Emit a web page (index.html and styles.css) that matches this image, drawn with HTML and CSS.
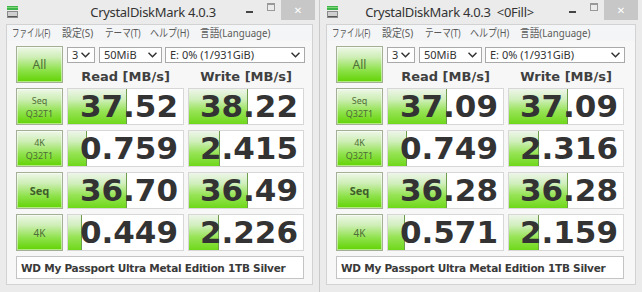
FILE: index.html
```html
<!DOCTYPE html>
<html>
<head>
<meta charset="utf-8">
<link rel="stylesheet" href="styles.css">
</head>
<body>
<div class="desk">
  <div class="win win-left">
    <div class="titlebar">
      <svg class="appicon" width="11" height="12" viewBox="0 0 11 12"><rect x="0" y="0" width="11" height="4" fill="#3fb549"/><rect x="0" y="1" width="11" height="1" fill="#7fd67a"/><rect x="0" y="5" width="11" height="7" fill="#8a8a8a"/><rect x="1" y="6" width="9" height="4" fill="#cfcfcf"/><rect x="1" y="10" width="9" height="1" fill="#555"/></svg>
      <div class="title title-center">CrystalDiskMark 4.0.3</div>
      <div class="ctrls">
        <div class="cbtn min"><span class="dash"></span></div>
        <div class="cbtn max"><span class="box"></span></div>
        <div class="cbtn close">✕</div>
      </div>
    </div>
    <div class="client">
      <div class="menu">
        <span class="mi mi1"><span class="mt">ファイル(F)</span></span><span class="mi mi2"><span class="mt">設定(S)</span></span><span class="mi mi3"><span class="mt">テーマ(T)</span></span><span class="mi mi4"><span class="mt">ヘルプ(H)</span></span><span class="mi mi5"><span class="mt">言語(Language)</span></span>
      </div>
      <div class="panel">
        <div class="btn btn-all">All</div>
        <div class="combos">
          <div class="combo c-n">3<svg class="chev" width="9" height="6" viewBox="0 0 9 6"><polyline points="0.5,0.8 4.5,4.8 8.5,0.8" fill="none" stroke="#333" stroke-width="1.5"/></svg></div>
          <div class="combo c-s">50MiB<svg class="chev" width="9" height="6" viewBox="0 0 9 6"><polyline points="0.5,0.8 4.5,4.8 8.5,0.8" fill="none" stroke="#333" stroke-width="1.5"/></svg></div>
          <div class="combo c-d">E: 0% (1/931GiB)<svg class="chev" width="9" height="6" viewBox="0 0 9 6"><polyline points="0.5,0.8 4.5,4.8 8.5,0.8" fill="none" stroke="#333" stroke-width="1.5"/></svg></div>
        </div>
        <div class="head">Read [MB/s]</div>
        <div class="head">Write [MB/s]</div>

        <div class="btn btn-two"><span>Seq</span><span>Q32T1</span></div>
        <div class="cell"><div class="bar" style="width:59px"></div><span class="num">37.52</span></div>
        <div class="cell"><div class="bar" style="width:59px"></div><span class="num">38.22</span></div>

        <div class="btn btn-two"><span>4K</span><span>Q32T1</span></div>
        <div class="cell"><div class="bar" style="width:19px"></div><span class="num">0.759</span></div>
        <div class="cell"><div class="bar" style="width:31px"></div><span class="num">2.415</span></div>

        <div class="btn btn-one">Seq</div>
        <div class="cell"><div class="bar" style="width:59px"></div><span class="num">36.70</span></div>
        <div class="cell"><div class="bar" style="width:59px"></div><span class="num">36.49</span></div>

        <div class="btn btn-one btn-sm">4K</div>
        <div class="cell"><div class="bar" style="width:14px"></div><span class="num">0.449</span></div>
        <div class="cell"><div class="bar" style="width:30px"></div><span class="num">2.226</span></div>

        <div class="name">WD My Passport Ultra Metal Edition 1TB Silver</div>
      </div>
    </div>
  </div>

  <div class="win win-right">
    <div class="titlebar">
      <svg class="appicon" width="11" height="12" viewBox="0 0 11 12"><rect x="0" y="0" width="11" height="4" fill="#3fb549"/><rect x="0" y="1" width="11" height="1" fill="#7fd67a"/><rect x="0" y="5" width="11" height="7" fill="#8a8a8a"/><rect x="1" y="6" width="9" height="4" fill="#cfcfcf"/><rect x="1" y="10" width="9" height="1" fill="#555"/></svg>
      <div class="title">CrystalDiskMark 4.0.3&nbsp;&nbsp;&lt;0Fill&gt;</div>
      <div class="ctrls">
        <div class="cbtn min"><span class="dash"></span></div>
        <div class="cbtn max"><span class="box"></span></div>
        <div class="cbtn close">✕</div>
      </div>
    </div>
    <div class="client">
      <div class="menu">
        <span class="mi mi1"><span class="mt">ファイル(F)</span></span><span class="mi mi2"><span class="mt">設定(S)</span></span><span class="mi mi3"><span class="mt">テーマ(T)</span></span><span class="mi mi4"><span class="mt">ヘルプ(H)</span></span><span class="mi mi5"><span class="mt">言語(Language)</span></span>
      </div>
      <div class="panel">
        <div class="btn btn-all">All</div>
        <div class="combos">
          <div class="combo c-n">3<svg class="chev" width="9" height="6" viewBox="0 0 9 6"><polyline points="0.5,0.8 4.5,4.8 8.5,0.8" fill="none" stroke="#333" stroke-width="1.5"/></svg></div>
          <div class="combo c-s">50MiB<svg class="chev" width="9" height="6" viewBox="0 0 9 6"><polyline points="0.5,0.8 4.5,4.8 8.5,0.8" fill="none" stroke="#333" stroke-width="1.5"/></svg></div>
          <div class="combo c-d">E: 0% (1/931GiB)<svg class="chev" width="9" height="6" viewBox="0 0 9 6"><polyline points="0.5,0.8 4.5,4.8 8.5,0.8" fill="none" stroke="#333" stroke-width="1.5"/></svg></div>
        </div>
        <div class="head">Read [MB/s]</div>
        <div class="head">Write [MB/s]</div>

        <div class="btn btn-two"><span>Seq</span><span>Q32T1</span></div>
        <div class="cell"><div class="bar" style="width:59px"></div><span class="num">37.09</span></div>
        <div class="cell"><div class="bar" style="width:59px"></div><span class="num">37.09</span></div>

        <div class="btn btn-two"><span>4K</span><span>Q32T1</span></div>
        <div class="cell"><div class="bar" style="width:19px"></div><span class="num">0.749</span></div>
        <div class="cell"><div class="bar" style="width:30px"></div><span class="num">2.316</span></div>

        <div class="btn btn-one">Seq</div>
        <div class="cell"><div class="bar" style="width:59px"></div><span class="num">36.28</span></div>
        <div class="cell"><div class="bar" style="width:59px"></div><span class="num">36.28</span></div>

        <div class="btn btn-one btn-sm">4K</div>
        <div class="cell"><div class="bar" style="width:17px"></div><span class="num">0.571</span></div>
        <div class="cell"><div class="bar" style="width:30px"></div><span class="num">2.159</span></div>

        <div class="name">WD My Passport Ultra Metal Edition 1TB Silver</div>
      </div>
    </div>
  </div>
</div>
</body>
</html>
```

FILE: styles.css
```css
html, body {
  margin: 0;
  padding: 0;
  background: #e9e9e9;
}
.desk {
  display: flex;
  width: 642px;
  height: 292px;
}
.win {
  height: 292px;
  background: #ebebeb;
  display: flex;
  flex-direction: column;
  box-sizing: border-box;
}
.win-left {
  width: 320px;
  border-right: 1px solid #c9c9c9;
}
.win-right {
  width: 322px;
}
.titlebar {
  height: 24px;
  display: flex;
  align-items: flex-start;
  flex: none;
}
.appicon {
  margin: 6px 0 0 7px;
  flex: none;
}
.title {
  flex: 1;
  text-align: center;
  font-family: "Noto Sans", sans-serif;
  font-size: 13px;
  line-height: 24px;
  color: #333;
  white-space: nowrap;
  letter-spacing: -0.3px;
}
.title-center {
  padding-left: 50px;
}
.ctrls {
  display: flex;
  flex: none;
  margin-right: 4px;
  height: 20px;
}
.cbtn {
  display: flex;
  align-items: center;
  justify-content: center;
  height: 20px;
}
.min { width: 22px; }
.max { width: 21px; }
.close {
  width: 34px;
  background: #c7c7c7;
  color: #fff;
  font-family: "DejaVu Sans", sans-serif;
  font-size: 10px;
  font-weight: bold;
}
.dash {
  display: block;
  width: 7px;
  height: 2px;
  background: #444;
  margin-top: 3px;
}
.box {
  display: block;
  width: 6px;
  height: 5px;
  border: 1px solid #999;
  border-top-width: 2px;
  margin-top: -6px;
}
.client {
  flex: 1;
  margin: 0 6px 7px 6px;
  background: #f7f7f7;
  border: 1px solid #d2d2d2;
  display: flex;
  flex-direction: column;
}
.menu {
  height: 16px;
  display: flex;
  padding: 0 0 0 5px;
  font-family: "Noto Sans", "Noto Sans CJK JP", sans-serif;
  font-size: 11px;
  line-height: 16px;
  color: #5a5a5a;
  background: #f4f5f6;
  white-space: nowrap;
}
.mi { flex: none; overflow: visible; }
.mt { display: inline-block; transform-origin: 0 50%; }
.mi1 { width: 50px; }
.mi2 { width: 43px; }
.mi3 { width: 45px; }
.mi4 { width: 50px; }
.mi5 { width: 80px; }
.mi1 .mt { transform: scaleX(0.68); }
.mi2 .mt { transform: scaleX(0.9); }
.mi3 .mt { transform: scaleX(0.78); }
.mi4 .mt { transform: scaleX(0.82); }
.mi5 .mt { transform: scaleX(0.88); }
.panel {
  display: grid;
  grid-template-columns: 47px 117px 116px;
  grid-template-rows: 17px 15px repeat(4, 37px) 23px;
  column-gap: 4px;
  row-gap: 5px;
  padding: 5px 0 0 9px;
}
.btn {
  box-sizing: border-box;
  border: 1px solid #a4b096;
  background: linear-gradient(to bottom, #eef7e8 0%, #cdeeb4 30%, #8fe24c 65%, #62d304 100%);
  box-shadow: inset 0 0 0 1px rgba(255,255,255,0.5);
  display: flex;
  flex-direction: column;
  align-items: center;
  justify-content: center;
  font-family: "Noto Sans", sans-serif;
  color: #4e6e38;
}
.btn-all {
  grid-row: 1 / span 2;
  font-size: 12px;
}
.btn-two {
  font-size: 9px;
  line-height: 13px;
}
.btn-one {
  font-size: 11px;
  font-weight: bold;
  color: #3e5e2a;
}
.btn-sm {
  font-size: 10px;
  font-weight: normal;
  color: #4e6e38;
}
.combos {
  grid-column: 2 / span 2;
  display: flex;
  gap: 4px;
  margin-top: 1px;
  margin-right: -1px;
}
.combo {
  box-sizing: border-box;
  height: 16px;
  border: 1px solid #a9a9a9;
  background: #fff;
  display: flex;
  align-items: center;
  justify-content: space-between;
  padding: 0 4px 0 4px;
  font-family: "Noto Sans", sans-serif;
  font-size: 11px;
  color: #333;
  line-height: 14px;
}
.c-n { width: 28px; }
.c-s { width: 63px; margin-right: -1px; }
.c-d { flex: 1; }
.chev { flex: none; }
.head {
  font-family: "DejaVu Sans", sans-serif;
  font-weight: bold;
  font-size: 13px;
  line-height: 15px;
  color: #404040;
  text-align: center;
  margin-top: 1px;
}
.cell {
  position: relative;
  box-sizing: border-box;
  border: 1px solid #d7d7d7;
  background: #fff;
  display: flex;
  align-items: center;
  justify-content: flex-end;
  padding-right: 5px;
  overflow: hidden;
}
.bar {
  position: absolute;
  left: 0;
  top: 0;
  bottom: 0;
  box-sizing: border-box;
  border-right: 1px solid #6d9d4a;
  background: linear-gradient(to bottom, #eef5ea 0%, #d0efbc 30%, #98e458 62%, #6fd81a 100%);
}
.num {
  position: relative;
  font-family: "DejaVu Sans", sans-serif;
  font-weight: bold;
  font-size: 31px;
  line-height: 35px;
  color: #333;
}
.name {
  grid-column: 1 / span 3;
  box-sizing: border-box;
  border: 1px solid #c4c4c4;
  background: #fff;
  display: flex;
  align-items: center;
  padding-left: 4px;
  font-family: "DejaVu Sans", sans-serif;
  font-weight: bold;
  font-size: 10.5px;
  color: #3a3a3a;
  letter-spacing: -0.25px;
}
```
